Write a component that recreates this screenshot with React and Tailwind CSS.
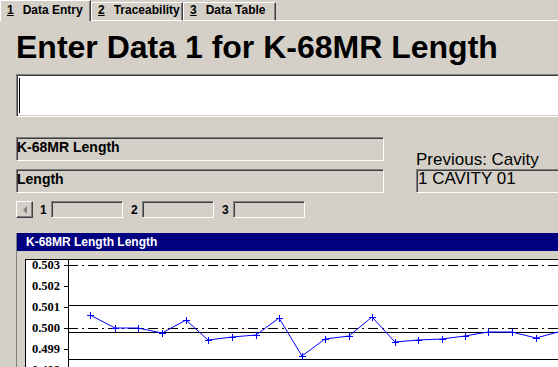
import React from 'react';

const sunken =
  'border border-t-[#808080] border-l-[#808080] border-b-white border-r-white shadow-[inset_1px_1px_0_#404040,inset_-1px_-1px_0_#d4d0c8]';

const Tab = ({ digit, label, active, width }) => (
  <div
    className={`${width} ${
      active ? 'h-[21px] pt-[2px]' : 'h-[19px] border-b border-b-white'
    } border-t border-l border-r border-t-white border-l-white border-r-[#404040] shadow-[inset_-1px_0_0_#808080] pl-[6px] text-[12px] leading-[14px] font-bold whitespace-nowrap`}
  >
    <span className="underline">{digit}</span>
    <span className="ml-[9px]">{label}</span>
  </div>
);

const points = [
  [65, 56], [90, 69], [113, 69], [137, 74], [161, 61], [183, 81], [207, 78],
  [231, 76], [254, 59], [277, 97], [300, 80], [324, 77], [347, 58], [370, 83],
  [393, 81], [417, 80], [440, 77], [463, 73], [487, 73], [511, 79], [533, 73],
];

const labels = ['0.503', '0.502', '0.501', '0.500', '0.499', '0.498'];

const Chart = () => (
  <svg width="560" height="110" shapeRendering="crispEdges" className="block">
    <rect x="0.5" y="0.5" width="620" height="200" fill="#fff" stroke="#000" />
    {labels.map((l, i) => (
      <g key={l}>
        <text
          x="35"
          y={10 + i * 21}
          textAnchor="end"
          fontFamily="'Liberation Serif', serif"
          fontWeight="bold"
          fontSize="12.5"
          fill="#000"
        >
          {l}
        </text>
        <line x1="39" x2="43" y1={6.5 + i * 21} y2={6.5 + i * 21} stroke="#000" />
      </g>
    ))}
    <line x1="43.5" x2="43.5" y1="0" y2="110" stroke="#000" />
    <line x1="43" x2="560" y1="6.5" y2="6.5" stroke="#000" strokeDasharray="10 4 2 4" />
    <line x1="43" x2="560" y1="46.5" y2="46.5" stroke="#000" />
    <line x1="43" x2="560" y1="69.5" y2="69.5" stroke="#000" strokeDasharray="10 4 2 4" />
    <line x1="43" x2="560" y1="73.5" y2="73.5" stroke="#000" />
    <line x1="43" x2="560" y1="100.5" y2="100.5" stroke="#000" />
    <polyline
      points={points.map(([x, y]) => `${x},${y}`).join(' ')}
      fill="none"
      stroke="#0000ff"
      shapeRendering="auto"
    />
    {points.map(([x, y], i) => (
      <g key={i} stroke="#0000ff">
        <line x1={x - 3} x2={x + 4} y1={y + 0.5} y2={y + 0.5} />
        <line x1={x + 0.5} x2={x + 0.5} y1={y - 3} y2={y + 4} />
      </g>
    ))}
  </svg>
);

const SmallBox = () => <div className={`${sunken} w-[72px] h-[17px] shrink-0`} />;

export default function App() {
  return (
    <div className="w-[558px] h-[367px] overflow-hidden bg-[#d4d0c8] text-black font-['Liberation_Sans',Arial,sans-serif]">
      <div className="flex items-end h-[21px]">
        <Tab digit="1" label="Data Entry" active width="w-[91px]" />
        <Tab digit="2" label="Traceability" width="w-[92px]" />
        <Tab digit="3" label="Data Table" width="w-[93px]" />
        <div className="flex-1 h-[1px] bg-white" />
      </div>

      <div className="pl-[16px]">
        <h1 className="mt-[8px] text-[32px] leading-[37px] font-bold whitespace-nowrap">
          Enter Data 1 for K-68MR Length
        </h1>

        <div className={`${sunken} mt-[8px] w-[600px] h-[43px] bg-white pt-[3px] pl-[2px]`}>
          <div className="w-[1px] h-[35px] bg-black" />
        </div>

        <div className="flex mt-[20px] w-[700px]">
          <div className="w-[368px] shrink-0">
            <div className={`${sunken} h-[24px] pt-[1px] text-[14px] leading-[16px] font-bold`}>
              K-68MR Length
            </div>
            <div className={`${sunken} mt-[8px] h-[24px] pt-[1px] text-[14px] leading-[16px] font-bold`}>
              Length
            </div>
          </div>
          <div className="ml-[32px] shrink-0 flex flex-col justify-end">
            <div className="text-[17px] leading-[19px] whitespace-nowrap">Previous: Cavity</div>
            <div className={`${sunken} w-[200px] h-[24px] pl-[1px] text-[17px] leading-[17px] whitespace-nowrap`}>
              1 CAVITY 01
            </div>
          </div>
        </div>

        <div className="flex items-center mt-[8px] h-[17px] text-[12px] font-bold">
          <div className="w-[17px] h-[17px] shrink-0 border border-t-white border-l-white border-b-[#404040] border-r-[#404040] shadow-[inset_-1px_-1px_0_#808080] flex items-center justify-center">
            <div className="w-0 h-0 border-y-[4px] border-y-transparent border-r-[4px] border-r-[#808080]" />
          </div>
          <span className="ml-[7px] w-[11px]">1</span>
          <SmallBox />
          <span className="ml-[8px] w-[11px]">2</span>
          <SmallBox />
          <span className="ml-[8px] w-[11px]">3</span>
          <SmallBox />
        </div>

        <div className="mt-[15px] w-[620px] border-l border-l-[#808080]">
          <div className="h-[18px] bg-[#000080] text-white text-[12px] leading-[18px] font-bold pl-[9px]">
            K-68MR Length Length
          </div>
          <div className="pl-[8px] pt-[8px]">
            <Chart />
          </div>
        </div>
      </div>
    </div>
  );
}
